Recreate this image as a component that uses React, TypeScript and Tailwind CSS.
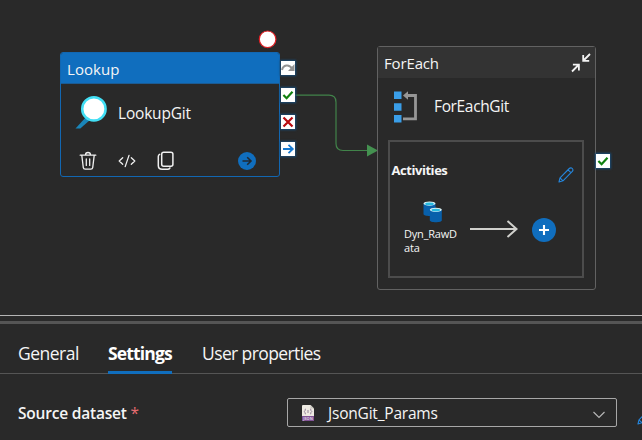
import React from "react";

type IconProps = { className?: string };

const Trash = () => (
  <svg className="h-5 w-[18px]" viewBox="0 0 18 20" fill="none" stroke="#f0f0f0" strokeWidth="1.3" strokeLinecap="round" strokeLinejoin="round">
    <path d="M1.2 4.2h15.6M6.500 4a2.500 2.500 0 0 1 5 0M2.800 4.400l1.500 12.200a1.900 1.900 0 0 0 1.900 1.600h5.600a1.900 1.900 0 0 0 1.900-1.600l1.500-12.200M7.300 8v6.400M10.700 8v6.400" />
  </svg>
);

const Code = () => (
  <svg className="h-4 w-[18px]" viewBox="0 0 18 16" fill="none" stroke="#f0f0f0" strokeWidth="1.3" strokeLinecap="round" strokeLinejoin="round">
    <path d="M4.700 4.700 1.200 8l3.500 3.300M13.300 4.700 16.800 8l-3.500 3.300M11 2.400 7.200 13.600" />
  </svg>
);

const Copy = () => (
  <svg className="h-5 w-[18px]" viewBox="0 0 18 20" fill="none" stroke="#f0f0f0" strokeWidth="1.5" strokeLinecap="round" strokeLinejoin="round">
    <rect x="4.700" y="1.200" width="11.200" height="14" rx="2" />
    <path d="M2.700 3.400c-1 .4-1.400 1-1.400 2v9c0 2.400 1.500 3.800 3.800 3.800h5.600c1 0 1.700-.4 2.200-1.200" />
  </svg>
);

const Magnifier = () => (
  <svg className="h-9 w-[34px] shrink-0" viewBox="0 0 34 36">
    <path d="M0.500 34.500 11.500 22.500 15 26 5.300 34.500z" fill="#1a85b8" />
    <circle cx="18.900" cy="14.900" r="11.700" fill="#fff" stroke="#42dff5" strokeWidth="2.500" />
  </svg>
);

const LoopIcon = () => (
  <svg className="h-8 w-6 shrink-0" viewBox="0 0 24 32">
    <path d="M0 0.500h7.500v7.500H0zM0 12.200h7.500v7.500H0zM0 24h7.500v7.500H0z" fill="#3a9ee8" />
    <path d="M12 4.500h9.500v23.300H9" fill="none" stroke="#969696" strokeWidth="2.800" />
    <path d="M9 4.500 14 .2v8.600z" fill="#969696" />
  </svg>
);

const Pencil = ({ className }: IconProps) => (
  <svg className={className} viewBox="0 0 16 16" fill="none" stroke="#2486de" strokeWidth="1.100" strokeLinejoin="round">
    <path d="m1 15 1-4.200L11.300 1.500c.9-.9 2.200-.9 3 0s.8 2 0 2.900L5 13.800zM2 10.800l3 3M10 2.800l3.200 3.100" />
  </svg>
);

const Check = () => (
  <svg className="size-3.5" viewBox="0 0 14 14" fill="none" stroke="#108010" strokeWidth="2.200">
    <path d="m2.400 6.900 3.200 3.300 5.900-6.500" />
  </svg>
);

const Port = ({ children }: { children: React.ReactNode }) => (
  <div className="flex size-3.5 items-center justify-center bg-white shadow-[0_0_2px_1px_#174c78]">{children}</div>
);

const Database = () => (
  <svg className="h-[22px] w-5" viewBox="0 0 20 22">
    <path d="M.5 2.500v10.500c0 1.300 2.800 2 6 2s6-.7 6-2V2.500z" fill="#0860ab" />
    <ellipse cx="6.500" cy="2.600" rx="6" ry="2.100" fill="#dff3f5" />
    <ellipse cx="6.500" cy="2.900" rx="4.400" ry="1.300" fill="#27bce2" />
    <path d="M6.800 8.700v10.600c0 1.300 2.800 2 6 2s6-.7 6-2V8.700z" fill="#0860ab" />
    <ellipse cx="12.800" cy="8.800" rx="6" ry="2.100" fill="#dff3f5" />
    <ellipse cx="12.800" cy="9.100" rx="4.400" ry="1.300" fill="#27bce2" />
  </svg>
);

const LookupNode = () => (
  <div className="absolute left-[60px] top-[52px] flex h-[125px] w-[220px] flex-col overflow-hidden rounded-[3px] border border-[#1267b2] bg-[#292929]">
    <div className="flex h-[31px] shrink-0 items-center border-b border-[#1c5b92] bg-[#106ebe] pl-1.5 pt-0.5 text-[15px] tracking-[0.05px]">Lookup</div>
    <div className="flex h-[58px] items-center pl-[14px]">
      <Magnifier />
      <span className="ml-[9px] mt-[3px] text-[15.500px] tracking-[-0.2px]">LookupGit</span>
    </div>
    <div className="flex h-9 items-center pl-[18px] pr-[23px] pt-[5px]">
      <Trash />
      <span className="ml-[21px]"><Code /></span>
      <span className="ml-[21px]"><Copy /></span>
      <svg className="ml-auto size-[18px]" viewBox="0 0 18 18">
        <circle cx="9" cy="9" r="9" fill="#106ebe" />
        <path d="M4.500 9h8.500M9.200 5.200 13 9l-3.800 3.800" fill="none" stroke="#202a34" strokeWidth="1.600" />
      </svg>
    </div>
  </div>
);

const ForEachNode = () => (
  <div className="absolute left-[377px] top-[46px] flex h-[244px] w-[219px] flex-col rounded-[3px] border border-[#626262] bg-[#292929]">
    <div className="flex h-[31px] items-center justify-between bg-[#333333] pl-[6px] pr-1 text-[15px]">
      <span className="pt-px tracking-[-0.15px]">ForEach</span>
      <svg className="h-5 w-5" viewBox="0 0 20 20" fill="none" stroke="#f3f3f3" strokeWidth="1.800">
        <path d="m19 1-6.500 6.500M12.200 2v5.900h6M1 18.500 7.500 12M1.900 11.600h6v6" />
      </svg>
    </div>
    <div className="flex h-[62px] items-center pb-1 pl-4">
      <LoopIcon />
      <span className="ml-4 text-[15.500px] tracking-[-0.35px]">ForEachGit</span>
    </div>
    <div className="ml-2.5 flex h-[138px] w-[196px] flex-col border-2 border-[#4c4c4c]">
      <div className="flex h-[58px] items-center justify-between pl-[1.500px] pr-2">
        <span className="text-[13px] font-bold tracking-[-0.45px]">Activities</span>
        <Pencil className="mt-2 h-4 w-4" />
      </div>
      <div className="flex items-start pl-3.5">
        <div className="flex w-[56px] flex-col">
          <div className="ml-[19px] mt-px"><Database /></div>
          <div className="mt-[4px] text-[11px] leading-[14px] tracking-[-0.2px]">Dyn_RawD<br />ata</div>
        </div>
        <svg className="ml-2.5 mt-[19px] h-5 w-12" viewBox="0 0 48 20" fill="none" stroke="#d0d0cc" strokeWidth="2">
          <path d="M0 10h46M37.500 2l9 8-9 8" />
        </svg>
        <svg className="ml-3.5 mt-[18px] size-6" viewBox="0 0 24 24">
          <circle cx="12" cy="12" r="12" fill="#106ebe" />
          <path d="M12 7v10M7 12h10" stroke="#fff" strokeWidth="2.100" />
        </svg>
      </div>
    </div>
  </div>
);

const JsonFile = () => (
  <svg className="h-4 w-3 shrink-0" viewBox="0 0 12 16">
    <path d="M0 1q0-1 1-1h7.500L12 3.500V16H0z" fill="#eeeae2" />
    <path d="M8.500 0v3.500H12z" fill="#c8c5bf" />
    <path d="M0 11h12v5H0z" fill="#805395" />
    <path d="M4 4q-1 0-1 1v.7L2.200 6.500l.8.800V8q0 1 1 1M8 4q1 0 1 1v.7l.8.800-.8.800V8q0 1-1 1M6 5v3" fill="none" stroke="#8b7891" strokeWidth=".9" />
    <text x="6" y="14.900" textAnchor="middle" fontSize="3.800" fontWeight="bold" fill="#ded1e3">JSON</text>
  </svg>
);

export default function App() {
  return (
    <main className="flex h-[440px] w-[642px] flex-col overflow-hidden bg-[#292929] font-['Open_Sans','Noto_Sans',sans-serif] text-[#f5f5f5]">
      <section className="relative h-[315px] shrink-0">
        <svg className="absolute left-0 top-0 h-[315px] w-[642px]" viewBox="0 0 642 315" fill="none">
          <circle cx="267.600" cy="39.300" r="8.300" fill="#fff" stroke="#df1f24" strokeWidth="1.200" />
          <path d="M295 95.200h34q7 0 7 7v41.300q0 7 7 7h26" stroke="#41834a" strokeWidth="1.200" />
          <path d="M367 144.500v12l11-6z" fill="#449150" />
        </svg>
        <LookupNode />
        <ForEachNode />
        <div className="absolute left-[281px] top-[61px] flex flex-col gap-[13px]">
          <Port>
            <svg className="size-3.5" viewBox="0 0 14 14" fill="none">
              <path d="M1 9C2 4 8 2.500 11 7.500" stroke="#929292" strokeWidth="2" />
              <path d="M13.500 3v7H7z" fill="#929292" />
            </svg>
          </Port>
          <Port><Check /></Port>
          <Port>
            <svg className="size-3.5" viewBox="0 0 14 14" stroke="#b80b10" strokeWidth="2.200"><path d="m2.500 2.500 9 9m0-9-9 9" /></svg>
          </Port>
          <Port>
            <svg className="size-3.5" viewBox="0 0 14 14" fill="none" stroke="#1478d0" strokeWidth="1.800"><path d="M2 7h10M7.500 2.800 11.800 7l-4.300 4.200" /></svg>
          </Port>
        </div>
        <div className="absolute left-[596px] top-[154px]"><Port><Check /></Port></div>
      </section>
      <div className="h-[9px] shrink-0 border-b-[3px] border-t border-b-[#555555] border-t-[#b4b4b4]" />
      <nav className="flex h-[50px] shrink-0 gap-[30px] border-b border-[#555555] pl-[18px] text-[17.500px]">
        <button className="h-[50px] w-[60px] whitespace-nowrap pt-[8px] text-left tracking-[-0.5px]">General</button>
        <button className="h-[50px] w-16 whitespace-nowrap border-b-[3px] border-[#106ebe] pt-[11px] text-left font-bold tracking-[-0.85px] text-white">Settings</button>
        <button className="h-[50px] whitespace-nowrap pt-[8px] text-left tracking-[-0.6px]">User properties</button>
      </nav>
      <section className="flex h-[66px] shrink-0 items-center pl-[18px] pt-[11px]">
        <label className="mt-[3px] w-[269px] shrink-0 whitespace-nowrap text-[15.500px] font-semibold tracking-[-0.2px]">
          Source dataset <span className="font-normal text-[#e46c70]">*</span>
        </label>
        <div className="flex h-[29px] w-[330px] shrink-0 items-center rounded-[2px] border border-[#a7a7a7] pl-3.5 pr-[11px]">
          <JsonFile />
          <span className="ml-3.5 mt-[3px] text-[15.500px] tracking-[-0.2px]">JsonGit_Params</span>
          <svg className="ml-auto mt-1 h-2 w-3 shrink-0" viewBox="0 0 12 8" fill="none" stroke="#b5b5b5" strokeWidth="1.200"><path d="m.5 1 5.500 5.500L11.500 1" /></svg>
        </div>
        <Pencil className="ml-5 mt-2 h-4 w-4 shrink-0" />
      </section>
    </main>
  );
}
